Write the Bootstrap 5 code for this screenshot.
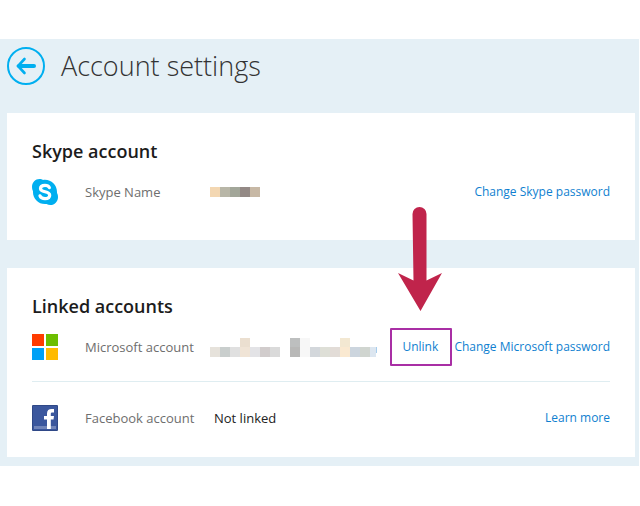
<!DOCTYPE html>
<html lang="en">
<head>
<meta charset="utf-8">
<meta name="viewport" content="width=device-width, initial-scale=1">
<title>Account settings</title>
<link rel="stylesheet" href="https://cdn.jsdelivr.net/npm/bootstrap@5.3.0/dist/css/bootstrap.min.css">
<style>
body { font-family: "Open Sans", "Noto Sans", sans-serif; font-size: 13px; line-height: 20px; color: #222; background: #fff; }
.settings-page { margin-top: 39px; margin-right: 1px; padding: 8px 4px 9px 7px; background: #e5f0f6; }
.page-head { gap: 16px; margin-bottom: 28px; }
.back-button { width: 38px; height: 38px; }
.page-title { font-size: 27px; line-height: 38px; font-weight: 300; color: #333; }
.panel { padding: 24px 25px 29px; background: #fff; }
.panel + .panel { margin-top: 28px; padding-bottom: 20px; }
.panel-title { font-size: 18px; line-height: 28px; font-weight: 600; color: #1c1c1c; margin-bottom: 8px; }
.account-row { min-height: 38px; }
.account-icon { width: 26px; height: 26px; margin-right: 27px; }
.account-label { width: 125px; color: #6e6e6e; }
.account-value { padding-left: 4px; }
.account-links { font-size: 12px; }
.account-links a { color: #0f7fd0; }
.unlink-box { width: 62px; height: 38px; padding-left: 10px; margin-right: 2px; border: 2px solid #a92fa5; border-radius: 1px; }
.pointer-arrow { left: 6px; bottom: calc(100% + 19px); }
.divided { min-height: 56px; margin-top: 15px; padding-top: 17px; border-top: 1px solid #dfedf1; }
</style>
<script src="https://cdn.jsdelivr.net/npm/bootstrap@5.3.0/dist/js/bootstrap.bundle.min.js"></script>
</head>
<body>
<main class="settings-page">
  <header class="page-head d-flex align-items-center">
    <button type="button" class="back-button btn p-0 border-0 d-flex" aria-label="Back">
      <svg width="38" height="38" viewBox="0 0 38 38" fill="none" stroke="#00aff0">
        <circle cx="19" cy="19" r="18" stroke-width="2"/>
        <path d="M27 19H12" stroke-width="4" stroke-linecap="round"/>
        <path d="M17.500 12L11 19l6.500 7" stroke-width="2.600" stroke-linecap="round" stroke-linejoin="miter"/>
      </svg>
    </button>
    <h1 class="page-title mb-0">Account settings</h1>
  </header>

  <section class="panel">
    <h2 class="panel-title">Skype account</h2>
    <div class="account-row d-flex align-items-center">
      <svg class="account-icon flex-shrink-0" viewBox="0 0 26 26" aria-hidden="true">
        <path fill="#00aff0" d="M7.500 0C9 0 10 .4 11 1c7.500-1.200 14.500 4.500 14 13 .8 1.300 1 2.700 1 4.200 0 4.300-3.400 7.800-7.600 7.800-1.500 0-2.700-.4-3.800-1C7 26 .5 20 1 12.200.3 11 0 9.500 0 8 0 3.400 3.300 0 7.500 0z"/>
        <path fill="none" stroke="#fff" stroke-width="3.200" stroke-linecap="round" d="M17.400 8.600C16.500 6.800 14.900 6.400 13 6.400c-2.500 0-4.500 1.100-4.500 3.100 0 4.600 9.200 2 9.200 6.700 0 2.200-2 3.400-4.700 3.400-2.300 0-4.200-.8-5-2.800"/>
      </svg>
      <span class="account-label flex-shrink-0">Skype Name</span>
      <svg width="50" height="10" shape-rendering="crispEdges" role="img" aria-label="Hidden name">
        <path fill="#f3d7b2" d="M0 0h10v10H0z"/><path fill="#b8b6a7" d="M10 0h10v10H10z"/><path fill="#a2a699" d="M20 0h10v10H20z"/><path fill="#938985" d="M30 0h10v10H30z"/><path fill="#c7b8a5" d="M40 0h10v10H40z"/>
      </svg>
      <div class="account-links ms-auto"><a class="text-decoration-none" href="#">Change Skype password</a></div>
    </div>
  </section>

  <section class="panel">
    <h2 class="panel-title">Linked accounts</h2>
    <div class="account-row d-flex align-items-center">
      <svg class="account-icon flex-shrink-0" viewBox="0 0 26 26" shape-rendering="crispEdges" aria-hidden="true">
        <path fill="#ff3c00" d="M0 0h12v12H0z"/><path fill="#6cbe00" d="M14 0h12v12H14z"/><path fill="#00a1f6" d="M0 14h12v12H0z"/><path fill="#ffbb00" d="M14 14h12v12H14z"/>
      </svg>
      <span class="account-label flex-shrink-0">Microsoft account</span>
      <svg width="168" height="19" shape-rendering="crispEdges" role="img" aria-label="Hidden address">
        <path fill="#e6e2db" d="M0 9h10v10H0z"/><path fill="#c9cecd" d="M10 9h10v10H10z"/><path fill="#e0e0e0" d="M20 9h10v10H20z"/><path fill="#ebdfd0" d="M30 0h10v9H30z"/><path fill="#f0e4d6" d="M30 9h10v10H30z"/><path fill="#e3e3e6" d="M40 9h10v10H40z"/><path fill="#d1cccc" d="M50 9h10v10H50z"/><path fill="#dadada" d="M60 9h10v10H60z"/>
        <path fill="#bdbfbf" d="M80 0h10v9H80z"/><path fill="#b8b8b7" d="M80 9h10v10H80z"/><path fill="#f7f7f7" d="M90 0h10v19H90z"/><path fill="#d3d7db" d="M100 9h10v10h-10z"/><path fill="#dedfd7" d="M110 9h10v10h-10z"/><path fill="#e2dcd7" d="M120 9h10v10h-10z"/><path fill="#f3e8d2" d="M130 0h10v9h-10z"/><path fill="#fae9d1" d="M130 9h10v10h-10z"/><path fill="#ccd5de" d="M140 9h10v10h-10z"/><path fill="#d0d5d0" d="M150 9h10v10h-10z"/><path fill="#dce6f0" d="M160 9h6v10h-6z"/><path fill="#a7cdec" d="M166 9h1v6h-1z"/>
      </svg>
      <div class="account-links ms-auto d-flex align-items-center text-nowrap">
        <div class="unlink-box position-relative d-flex align-items-center">
          <svg class="pointer-arrow position-absolute" width="44" height="104" viewBox="0 0 44 104" aria-hidden="true">
            <path fill="#c0244b" d="M14.500 7a7 7 0 0 1 14 0v66.500L44 66 22.500 104 0 66l15.500 7.500z"/>
          </svg>
          <a class="text-decoration-none" href="#">Unlink</a>
        </div>
        <a class="text-decoration-none" href="#">Change Microsoft password</a>
      </div>
    </div>
    <div class="account-row divided d-flex align-items-center">
      <svg class="account-icon flex-shrink-0" viewBox="0 0 26 26" aria-hidden="true">
        <rect width="26" height="26" rx="1" fill="#2f4887"/>
        <path fill="#3b579d" d="M1 1h24v24H1z"/>
        <path fill="#7185b9" d="M2 21h22v3H2z"/>
        <path fill="#fff" d="M15 24V14.500h-3V11h3V8.500C15 5.400 16.800 4 19.500 4H22v3.500h-1.800c-1 0-1.400.5-1.400 1.500v2H22l-.5 3.500h-2.700V24z"/>
      </svg>
      <span class="account-label flex-shrink-0">Facebook account</span>
      <span class="account-value">Not linked</span>
      <div class="account-links ms-auto"><a class="text-decoration-none" href="#">Learn more</a></div>
    </div>
  </section>
</main>
</body>
</html>
